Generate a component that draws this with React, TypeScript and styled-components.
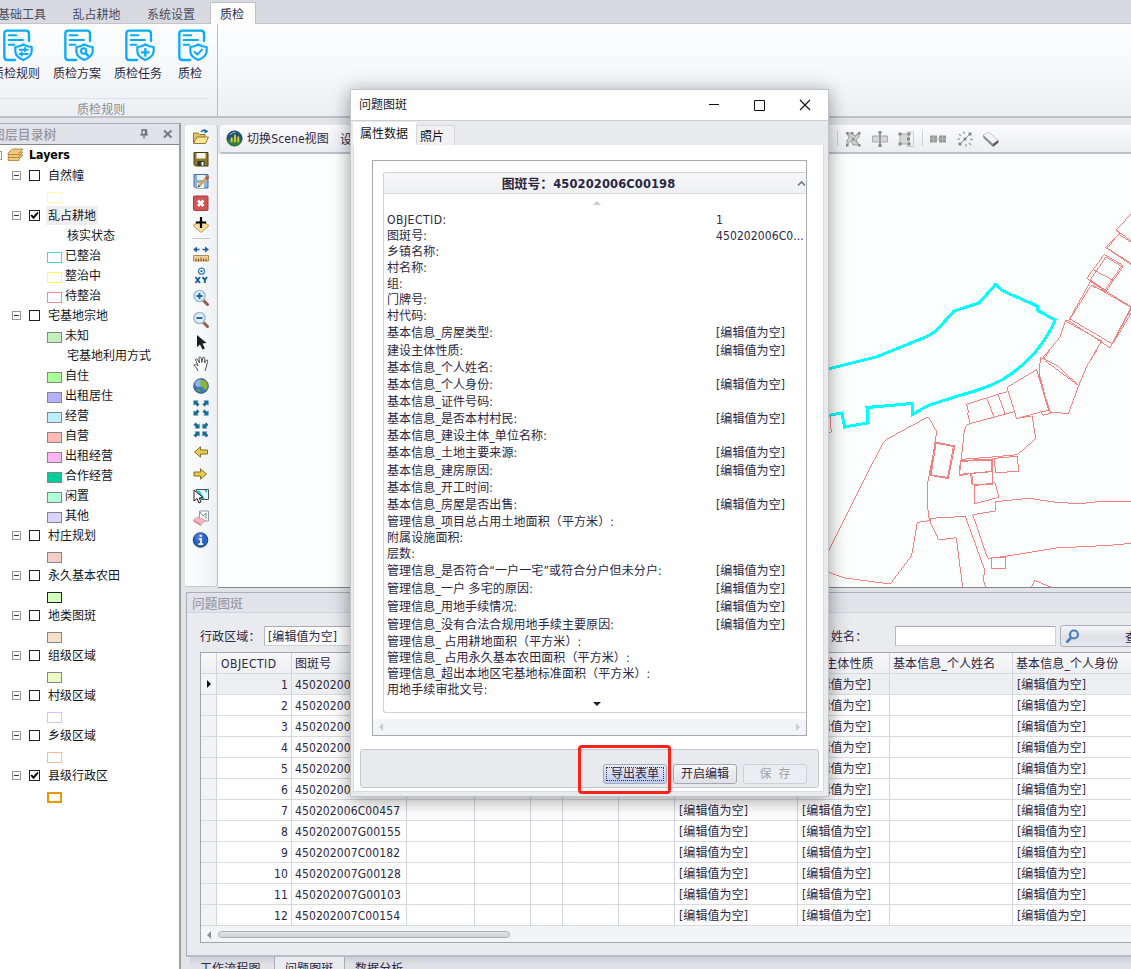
import React from 'react';
import styled, { createGlobalStyle, css } from 'styled-components';

const Global = createGlobalStyle`
  * { box-sizing: border-box; }
  body { margin: 0; overflow: hidden; }
  body, button, input {
    font-family: "DejaVu Sans Condensed", "DejaVu Sans", "Noto Sans CJK SC", sans-serif;
    font-stretch: condensed;
    font-size: 12px;
    letter-spacing: 0.1px;
    color: #2b2742;
  }
`;

const Window = styled.div`
  position: relative;
  display: flex;
  flex-direction: column;
  width: 1131px;
  height: 969px;
  overflow: hidden;
  background: #e3e4e9;
  line-height: 16px;
  white-space: nowrap;
`;

/* ---------- ribbon ---------- */
const TabStrip = styled.div`
  display: flex;
  flex: none;
  height: 24px;
  padding-top: 2px;
  background: #d9dae0;
  border-bottom: 1px solid #c4c5cc;
`;
const RibbonTab = styled.div<{ $active?: boolean; $w: number; $ml?: number }>`
  flex: none;
  width: ${p => p.$w}px;
  height: 22px;
  margin-left: ${p => p.$ml || 0}px;
  padding-top: 5px;
  text-align: center;
  letter-spacing: 0;
  color: #4b4a5c;
  ${p => p.$active && css`
    color: #2b2742;
    background: #fdfdfe;
    border: 1px solid #c0c1c9;
    border-bottom: 0;
    border-radius: 2px 2px 0 0;
    padding: 4px 2px 0 0;
  `}
`;
const Ribbon = styled.div`
  display: flex;
  flex: none;
  height: 94px;
  background: linear-gradient(#fdfdfe, #f8f9fb 45%, #edeff3);
  border-bottom: 2px solid #bfc0c8;
`;
const RibbonGroup = styled.div`
  display: flex;
  flex-direction: column;
  width: 218px;
  border-right: 1px solid #b9bac3;
`;
const RibbonItems = styled.div`
  display: flex;
  gap: 13px;
  height: 75px;
  margin-left: -8px;
  padding-top: 5px;
`;
const RibbonItem = styled.div<{ $w: number; $shift?: number }>`
  display: flex;
  flex-direction: column;
  align-items: center;
  gap: 4px;
  width: ${p => p.$w}px;
  letter-spacing: 0;
  svg {
    flex: none;
    margin-left: ${p => p.$shift || 3}px;
  }
`;
const GroupCaption = styled.div`
  height: 18px;
  padding: 3px 0 0;
  margin-right: 9px;
  padding-left: 77px;
  border-top: 1px solid #e0e1e7;
  color: #8b8c96;
`;

/* ---------- body ---------- */
const Body = styled.div`
  display: flex;
  flex: 1;
  min-height: 0;
  padding-top: 5px;
`;
const LayersPanel = styled.div`
  display: flex;
  flex-direction: column;
  flex: none;
  width: 181px;
  border-top: 1px solid #a9aab3;
  border-right: 2px solid #9c9da5;
`;
const PanelHeader = styled.div`
  display: flex;
  align-items: center;
  flex: none;
  height: 21px;
  background: #e1e2e8;
  border-bottom: 1px solid #85868d;
  color: #9596a3;
  font-size: 12.8px;
  font-weight: 500;
`;
const PanelTitle = styled.span`
  flex: 1;
  margin-left: -8px;
  padding-top: 1px;
`;
const HeaderIcons = styled.div`
  display: flex;
  align-items: center;
  gap: 15px;
  padding-right: 6px;
`;
const Tree = styled.div`
  flex: 1;
  background: #fff;
  color: #16161c;
  letter-spacing: 0;
`;
const TreeRow = styled.div`
  display: flex;
  align-items: center;
  height: 20px;
  padding-left: 12px;
`;
const Expander = styled.span`
  display: flex;
  align-items: center;
  justify-content: center;
  width: 9px;
  height: 9px;
  border: 1px solid #93939a;
  &::after { content: ""; width: 5px; height: 1px; background: #333; }
`;
const Check = styled.span`
  display: flex;
  width: 11px;
  height: 11px;
  margin: 0 5px 0 8px;
  border: 1px solid #222;
  background: #fff;
`;
const TreeLabel = styled.span<{ $selected?: boolean }>`
  height: 19px;
  line-height: 20px;
  padding: 0 2px 0 2px;
  margin-left: 1px;
  background: ${p => (p.$selected ? '#efefef' : 'transparent')};
`;
const Swatch = styled.span<{ $fill: string; $line: string; $thick?: boolean }>`
  width: 15px;
  height: 11px;
  margin: 5px 3px 0 35px;
  background: ${p => p.$fill};
  border: ${p => (p.$thick ? 2 : 1)}px solid ${p => p.$line};
`;
const LegendText = styled.span`
  padding-top: 2px;
`;
const LegendHeading = styled.span`
  padding: 2px 0 0 55px;
`;
const RootRow = styled(TreeRow)`
  padding-left: 0;
  font-size: 12.3px;
  font-weight: bold;
  color: #000;
  svg { margin: 0 5px 0 5px; }
`;
const CutExpander = styled.span`
  width: 2px;
  height: 9px;
  border: solid #93939a;
  border-width: 1px 1px 1px 0;
`;

const Workspace = styled.div`
  display: flex;
  flex-direction: column;
  flex: 1;
  min-width: 0;
  padding-left: 4px;
`;
const Upper = styled.div`
  display: flex;
  flex: none;
  height: 465px;
  padding-top: 2px;
`;
const SideTools = styled.div`
  display: flex;
  flex-direction: column;
  align-items: center;
  flex: none;
  width: 33px;
  height: 462px;
  padding-top: 1px;
  border-radius: 3px;
  background: linear-gradient(90deg, #fff, #eef0f4);
  border-right: 1px solid #bcbdc6;
  border-bottom: 1px solid #c7c8cf;
`;
const ToolSlot = styled.div`
  display: flex;
  align-items: center;
  justify-content: center;
  height: 22px;
`;
const ToolDivider = styled.div`
  width: 18px;
  height: 1px;
  margin: 2px 0 4px;
  background: #c9cad1;
`;
const MapColumn = styled.div`
  display: flex;
  flex-direction: column;
  flex: 1;
  min-width: 0;
`;
const MapToolbar = styled.div`
  display: flex;
  align-items: center;
  flex: none;
  height: 29px;
  margin-left: 2px;
  padding-left: 6px;
  border-radius: 3px 0 0 3px;
  background: linear-gradient(#fbfbfd, #eceef2);
  border-bottom: 2px solid #bfc0c9;
`;
const ToolText = styled.span`
  width: 97px;
  padding: 1px 0 0 4px;
`;
const EditTools = styled.div`
  display: flex;
  align-items: center;
  gap: 8.5px;
  margin-left: auto;
  padding-right: 131px;
`;
const VLine = styled.span`
  width: 1px;
  height: 15px;
  margin: 0 -2px;
  background: #cfcfd4;
`;
const MapView = styled.div`
  flex: none;
  height: 434px;
  overflow: hidden;
  background: #fdfefe;
  border-bottom: 1px solid #84858b;
  svg { display: block; }
`;

/* ---------- results panel ---------- */
const Results = styled.div`
  display: flex;
  flex-direction: column;
  flex: none;
  height: 365px;
  margin: 4px 0 0 1px;
  border: 1px solid #adaeb9;
  border-right: 0;
  border-bottom: 2px solid #babbc5;
  background: #eaebef;
`;
const ResultsTitle = styled.div`
  flex: none;
  height: 20px;
  padding: 3px 0 0 5px;
  background: #e2e3e8;
  border-bottom: 1px solid #d3d4db;
  color: #9a9ba8;
  font-weight: 500;
  font-size: 12.6px;
`;
const FilterRow = styled.div`
  display: flex;
  align-items: center;
  flex: none;
  height: 39px;
  padding: 7px 0 0 12px;
`;
const Field = styled.div<{ $w: number }>`
  display: flex;
  align-items: center;
  flex: none;
  width: ${p => p.$w}px;
  height: 20px;
  padding: 1px 0 0 3px;
  background: #fff;
  border: 1px solid #cfd0d8;
  border-top-color: #a9aab5;
  border-left-color: #b5b6c0;
`;
const FilterLabel = styled.span`
  flex: none;
  width: 65px;
  padding: 2px 0 0 1px;
`;
const FilterGap = styled.div`
  flex: none;
  width: 466px;
`;
const SearchButton = styled.button`
  display: flex;
  align-items: center;
  gap: 45px;
  flex: none;
  width: 100px;
  height: 22px;
  margin-left: 4px;
  padding: 0 4px;
  border: 1px solid #adaebb;
  border-radius: 3px;
  background: linear-gradient(#f4f5f7, #dfe1e6 55%, #e8e9ed);
  svg { flex: none; }
`;
const Grid = styled.div`
  flex: none;
  height: 291px;
  margin-left: 13px;
  border: 1px solid #a4a5b0;
  border-right: 0;
  overflow: hidden;
  background: #f3f4f6;
`;
const GridRow = styled.div<{ $head?: boolean; $focus?: boolean }>`
  display: grid;
  grid-template-columns: 16px 75px 115px 68px 56px 32px 56px 56px 123px 92px 123px 124px;
  height: 21px;
  background: ${p => (p.$head ? 'linear-gradient(#f8f8fa, #eeeff2)' : p.$focus ? '#eeeff1' : '#fff')};
`;
const Cell = styled.div<{ $right?: boolean; $indicator?: boolean; $tight?: boolean }>`
  display: flex;
  align-items: center;
  justify-content: ${p => (p.$right ? 'flex-end' : 'flex-start')};
  padding: 2px 3px 0 ${p => (p.$tight ? 3 : 4)}px;
  overflow: hidden;
  border-right: 1px solid #d3d4dc;
  border-bottom: 1px solid #d9dae1;
  ${p => p.$indicator && css`background: #f3f4f6; padding: 0 3px 0 6px;`}
`;
const GridScroll = styled.div`
  display: flex;
  align-items: center;
  gap: 7px;
  height: 17px;
  padding-left: 6px;
`;
const Thumb = styled.div`
  width: 292px;
  height: 7px;
  border: 1px solid #abacb7;
  border-radius: 4px;
  background: linear-gradient(#e3e4e8, #cfd0d6);
`;
const Arrow = styled.i<{ $dir: 'left' | 'right' | 'up' | 'down'; $color: string }>`
  width: 0;
  height: 0;
  border: 4px solid transparent;
  ${p => p.$dir === 'left' && `border-left-width: 0; border-right-color: ${p.$color};`}
  ${p => p.$dir === 'right' && `border-right-width: 0; border-left-color: ${p.$color};`}
  ${p => p.$dir === 'up' && `border-top-width: 0; border-bottom-color: ${p.$color};`}
  ${p => p.$dir === 'down' && `border-bottom-width: 0; border-top-color: ${p.$color};`}
`;
const Wide = styled.span`
  letter-spacing: 0.5px;
`;
const BottomTabs = styled.div`
  display: flex;
  flex: none;
  height: 12px;
  margin-left: 5px;
  background: linear-gradient(#cfd0d7, #e0e1e6 8px);
`;
const BottomTab = styled.div<{ $w: number; $active?: boolean }>`
  flex: none;
  width: ${p => p.$w}px;
  height: 12px;
  overflow: hidden;
  padding: 4px 0 0 10px;
  border-right: 1px solid #a9aab4;
  background: ${p => (p.$active ? '#eaebef' : 'linear-gradient(#cfd0d7, #e0e1e6 8px)')};
  &:last-child { border-right: 0; }
`;

/* ---------- dialog ---------- */
const Dialog = styled.div`
  position: absolute;
  left: 350px;
  top: 89px;
  display: flex;
  flex-direction: column;
  width: 479px;
  height: 708px;
  background: #e9eaee;
  border: 1px solid #c3c4ca;
  box-shadow: 0 3px 18px rgba(0, 0, 0, 0.4);
`;
const TitleBar = styled.div`
  display: flex;
  align-items: center;
  flex: none;
  height: 31px;
  padding: 0 17px 0 8px;
  background: #fff;
  border-bottom: 1px solid #cccdd3;
  color: #17171c;
  svg { margin-left: 34px; }
`;
const TitleText = styled.span`
  flex: 1;
  letter-spacing: 0;
`;
const DialogTabs = styled.div`
  display: flex;
  align-items: flex-end;
  flex: none;
  height: 24px;
  margin: 0 4px 0 2px;
`;
const DialogTab = styled.div<{ $active?: boolean }>`
  width: ${p => (p.$active ? 63 : 39)}px;
  height: ${p => (p.$active ? 23 : 20)}px;
  padding: ${p => (p.$active ? '4px 0 0 7px' : '3px 0 0 3px')};
  background: ${p => (p.$active ? '#fff' : '#f0f0f0')};
  border: ${p => (p.$active ? '0 solid' : '1px solid #d7d7dc')};
  border-bottom: 0;
  letter-spacing: 0;
  color: #111117;
`;
const DialogPage = styled.div`
  display: flex;
  flex-direction: column;
  flex: 1;
  min-height: 0;
  margin: 0 4px 4px 2px;
  padding: 15px 4px 4px 6px;
  background: #fff;
  border: 1px solid #d9dae0;
  border-top: 0;
`;
const FormFrame = styled.div`
  display: flex;
  flex-direction: column;
  flex: none;
  width: 435px;
  height: 576px;
  margin-left: 12px;
  padding-top: 11px;
  overflow: hidden;
  border: 1px solid #a7a8b4;
`;
const FormGroup = styled.div`
  display: flex;
  flex-direction: column;
  flex: none;
  height: 541px;
  margin-left: 10px;
  border: 1px solid #d0d1d8;
  border-right: 0;
  border-radius: 3px 0 0 3px;
`;
const FormHead = styled.div`
  display: flex;
  align-items: center;
  flex: none;
  height: 21px;
  background: linear-gradient(#f7f7f9, #eff0f3);
  border-bottom: 1px solid #d9dae0;
  font-weight: bold;
  font-size: 12.8px;
`;
const FormHeadText = styled.span`
  flex: 1;
  text-align: center;
  padding: 2px 4px 0 0;
`;
const ScrollHint = styled.div<{ $h: number }>`
  display: flex;
  align-items: center;
  justify-content: center;
  flex: none;
  height: ${p => p.$h}px;
  padding-left: 4px;
`;
const FormRow = styled.div<{ $edit: boolean }>`
  display: grid;
  grid-template-columns: 329px 1fr;
  align-items: center;
  flex: none;
  height: ${p => (p.$edit ? 18 : 16)}px;
  line-height: ${p => (p.$edit ? 20 : 18)}px;
  padding-left: 3px;
`;
const FormScroll = styled.div`
  display: flex;
  align-items: center;
  justify-content: space-between;
  height: 17px;
  margin-top: 6px;
  padding: 0 6px;
  background: #f3f4f6;
`;
const Footer = styled.div`
  display: flex;
  align-items: center;
  justify-content: flex-end;
  gap: 6px;
  flex: none;
  width: 459px;
  height: 39px;
  margin-top: 13px;
  padding: 11px 11px 0 0;
  background: #e9eaee;
  border: 1px solid #c6c7d0;
  border-radius: 3px;
`;
const DialogButton = styled.button<{ $focus?: boolean; $off?: boolean }>`
  width: 64px;
  height: 20px;
  padding: 1px 0 0;
  line-height: 17px;
  letter-spacing: 0;
  border: 1px solid ${p => (p.$off ? '#cfd0d7' : '#a7a8b5')};
  border-radius: 3px;
  background: ${p => (p.$off ? '#ecedf0' : 'linear-gradient(#f6f6f8, #dfe1e7)')};
  color: ${p => (p.$off ? '#a2a3ac' : '#2b2742')};
  ${p => p.$focus && css`
    background: linear-gradient(#e8edfb, #bccbf0);
    outline: 1px dotted #333;
    outline-offset: -4px;
  `}
`;
const Highlight = styled.div`
  position: absolute;
  left: 578px;
  top: 745px;
  width: 93px;
  height: 49px;
  border: 3px solid #fb2317;
  border-radius: 4px;
`;

/* ---------- data ---------- */
const EMPTY = '[编辑值为空]';

type Node =
  | { k: 'layer'; t: string; on?: boolean; sel?: boolean }
  | { k: 'head'; t: string }
  | { k: 'sw'; t?: string; f: string; l?: string; thick?: boolean };

const nodes: Node[] = [
  { k: 'layer', t: '自然幢' },
  { k: 'sw', f: '#fff', l: '#ffffa0' },
  { k: 'layer', t: '乱占耕地', on: true, sel: true },
  { k: 'head', t: '核实状态' },
  { k: 'sw', t: '已整治', f: '#fff', l: '#40e0b0' },
  { k: 'sw', t: '整治中', f: '#fff', l: '#ffff46' },
  { k: 'sw', t: '待整治', f: '#fff', l: '#f58c8c' },
  { k: 'layer', t: '宅基地宗地' },
  { k: 'sw', t: '未知', f: '#c2f0bd' },
  { k: 'head', t: '宅基地利用方式' },
  { k: 'sw', t: '自住', f: '#abff96' },
  { k: 'sw', t: '出租居住', f: '#b3b0ff' },
  { k: 'sw', t: '经营', f: '#bdeeff' },
  { k: 'sw', t: '自营', f: '#ffbab5' },
  { k: 'sw', t: '出租经营', f: '#ffb5f2' },
  { k: 'sw', t: '合作经营', f: '#00cc99' },
  { k: 'sw', t: '闲置', f: '#b0ffd8' },
  { k: 'sw', t: '其他', f: '#d8d6ff' },
  { k: 'layer', t: '村庄规划' },
  { k: 'sw', f: '#f2d0c6' },
  { k: 'layer', t: '永久基本农田' },
  { k: 'sw', f: '#d2ffbe', l: '#222' },
  { k: 'layer', t: '地类图斑' },
  { k: 'sw', f: '#f5e0c8' },
  { k: 'layer', t: '组级区域' },
  { k: 'sw', f: '#e9fcc4' },
  { k: 'layer', t: '村级区域' },
  { k: 'sw', f: '#fff', l: '#dfc0ff' },
  { k: 'layer', t: '乡级区域' },
  { k: 'sw', f: '#fff', l: '#ffb59b' },
  { k: 'layer', t: '县级行政区', on: true },
  { k: 'sw', f: '#fff', l: '#e69a00', thick: true },
];

const fields: [string, string?, boolean?][] = [
  ['OBJECTID:', '1'],
  ['图斑号:', '450202006C0...'],
  ['乡镇名称:'],
  ['村名称:'],
  ['组:'],
  ['门牌号:'],
  ['村代码:'],
  ['基本信息_房屋类型:', EMPTY, true],
  ['建设主体性质:', EMPTY, true],
  ['基本信息_个人姓名:'],
  ['基本信息_个人身份:', EMPTY, true],
  ['基本信息_证件号码:'],
  ['基本信息_是否本村村民:', EMPTY, true],
  ['基本信息_建设主体_单位名称:'],
  ['基本信息_土地主要来源:', EMPTY, true],
  ['基本信息_建房原因:', EMPTY, true],
  ['基本信息_开工时间:'],
  ['基本信息_房屋是否出售:', EMPTY, true],
  ['管理信息_项目总占用土地面积（平方米）:'],
  ['附属设施面积:'],
  ['层数:'],
  ['管理信息_是否符合“一户一宅”或符合分户但未分户:', EMPTY, true],
  ['管理信息_一户 多宅的原因:', EMPTY, true],
  ['管理信息_用地手续情况:', EMPTY, true],
  ['管理信息_没有合法合规用地手续主要原因:', EMPTY, true],
  ['管理信息_ 占用耕地面积（平方米）:'],
  ['管理信息_ 占用永久基本农田面积（平方米）:'],
  ['管理信息_超出本地区宅基地标准面积（平方米）:'],
  ['用地手续审批文号:'],
];

const codes = [
  '450202006C00198', '450202006C00201', '450202006C00215', '450202006C00233',
  '450202006C00318', '450202006C00402', '450202006C00457', '450202007G00155',
  '450202007C00182', '450202007G00128', '450202007G00103', '450202007C00154',
];

/* ---------- icons ---------- */
const DocIcon = ({ kind }: { kind: 'rule' | 'plan' | 'task' | 'check' }) => (
  <svg width="30" height="33" viewBox="0 0 90 99" fill="none" stroke="#08acfa" strokeWidth="7" strokeLinecap="round" strokeLinejoin="round">
    <path d="M78 36V14Q78 5 69 5H13Q4 5 4 14V84Q4 93 13 93H36" />
    <path d="M17 19H40M17 33H60M17 47H34" strokeWidth="6" />
    <path d="M61 46Q50 53 37 54V68Q39 85 61 93Q83 85 86 68V54Q72 53 61 46Z" strokeWidth="6.5" fill="#fafbfc" />
    {kind === 'rule' && <path d="M50 62H74M50 75H74M66 57V67M56 70V80" strokeWidth="6" />}
    {kind === 'plan' && <><circle cx="59" cy="66" r="8" strokeWidth="6" /><path d="M65 73L72 80" /></>}
    {kind === 'task' && <path d="M61 60V80M51 70H71" />}
    {kind === 'check' && <path d="M50 69L58 77L72 62" strokeWidth="6" />}
  </svg>
);

const T = ({ children }: { children: React.ReactNode }) => (
  <svg width="18" height="18" viewBox="0 0 18 18">{children}</svg>
);

const globe = (
  <>
    <circle cx="9" cy="9" r="7.5" fill="#3a78c0" />
    <circle cx="7" cy="6" r="4" fill="#b3d2f2" opacity=".7" />
    <path d="M8 4Q12 1.500 15 5Q17 8 15.500 12L12 13Q12 10 9 9.500Q8 6 8 4Z" fill="#8bb43b" />
    <path d="M4 12Q8 11 9 15Q6 16 4 12Z" fill="#6c9c35" />
    <circle cx="9" cy="9" r="7.300" fill="none" stroke="#2b5288" strokeWidth=".8" />
  </>
);
const magnifier = (
  <>
    <path d="M11 11L15.500 15.500" stroke="#9c5a48" strokeWidth="3" strokeLinecap="round" />
    <circle cx="7.500" cy="7" r="5.500" fill="#e2f2fd" stroke="#9dbdd8" strokeWidth="1.600" />
  </>
);
const corner = 'M0 0H5L3.800 1.600L6 3.900L3.900 6L1.600 3.800L0 5Z';

const sideIcons: React.ReactNode[] = [
  <>
    <path d="M1.500 15V5H6L7.500 6.500H13V9" fill="#e2c566" stroke="#96792a" />
    <path d="M1.500 15.500L5 9H16.500L13.500 15.500Z" fill="#fae79c" stroke="#96792a" />
    <path d="M9 4Q11 1.500 13 3" fill="none" stroke="#246aa5" strokeWidth="1.600" />
    <path d="M12.500 .8L16.500 3.500L12.500 5.500Z" fill="#246aa5" />
  </>,
  <>
    <path d="M2 2.500H16V16H3.500L2 14.500Z" fill="#8c7b2f" stroke="#453c17" />
    <path d="M4.500 3H13.500V8.500H4.500Z" fill="#f6f4e6" />
    <path d="M5.500 11H12.500V16H5.500Z" fill="#35332a" />
    <path d="M9.500 12H11.500V15.500H9.500Z" fill="#fff" />
  </>,
  <>
    <path d="M2 2.500H16V16H3.500L2 14.500Z" fill="#8db2dc" stroke="#49719e" />
    <path d="M5 3H13V8H5ZM5 11H12V16H5Z" fill="#eaf2fb" />
    <path d="M7 14L14.500 6" stroke="#d8a848" strokeWidth="2.600" />
    <path d="M14 7L16.500 4.500" stroke="#bb5248" strokeWidth="2.600" />
    <path d="M5.500 15.500L8 14.800L6.300 13Z" fill="#333" />
  </>,
  <>
    <rect x="1.500" y="2" width="14.500" height="14.500" rx="1" fill="#d25454" stroke="#a33d40" />
    <path d="M6 6.500L11.500 12M11.500 6.500L6 12" stroke="#fff" strokeWidth="2.600" />
  </>,
  <>
    <path d="M1 9.500L9 4.500L17 9.500L9 16.500Z" fill="#fbdf94" stroke="#c99f4e" />
    <path d="M9 1V12M3.800 6.500H14.200" stroke="#000" strokeWidth="2.200" />
  </>,
  <>
    <path d="M1 4.500L5 1.500V3.700H7.500V5.300H5V7.500ZM17 4.500L13 1.500V3.700H10.500V5.300H13V7.500Z" fill="#1d629c" />
    <path d="M1.500 10.500H16.500V16H1.500Z" fill="#f2cf93" stroke="#b48a52" />
    <path d="M4 16V13.500M6.500 16V13.500M9 16V12.500M11.500 16V13.500M14 16V13.500" stroke="#7a4f21" />
  </>,
  <>
    <circle cx="9.500" cy="4.200" r="3" fill="#fff" stroke="#3f81b8" strokeWidth="1.300" />
    <circle cx="9.500" cy="4.200" r="1.100" fill="#1d629c" />
    <path d="M3.500 10L8 16M8 10L3.500 16M10.500 10L12.800 13L15 10M12.800 13V16" stroke="#1d5fa0" strokeWidth="1.900" fill="none" />
  </>,
  <>{magnifier}<path d="M7.500 4V10M4.500 7H10.500" stroke="#1d629c" strokeWidth="1.900" /></>,
  <>{magnifier}<path d="M4.500 7H10.500" stroke="#1d629c" strokeWidth="1.900" /></>,
  <path d="M5 2V14L8 11.500L10.500 16.500L12.800 15.400L10.500 10.500L14.500 10Z" fill="#1c1c1e" />,
  <path d="M6 16Q5 12.500 1.800 10Q3 8.500 6 10.500L3.500 4.500Q4.500 3 6 5L7.500 8L7 2.500Q8.500 1 9.300 3L9.800 7.500L11 2.500Q12.500 1.500 12.800 3.500L12.500 8L14.500 5Q16 4.500 15.600 6.500L14.200 12L13 16" fill="#fff" stroke="#555" />,
  globe,
  <g fill="#1b6a98">
    <path d={corner} transform="translate(1.500 1.500)" />
    <path d={corner} transform="translate(16.500 1.500) scale(-1 1)" />
    <path d={corner} transform="translate(1.500 16.500) scale(1 -1)" />
    <path d={corner} transform="translate(16.500 16.500) scale(-1 -1)" />
  </g>,
  <g fill="#1b6a98">
    <path d={corner} transform="translate(7.600 7.600) scale(-1 -1)" />
    <path d={corner} transform="translate(10.400 7.600) scale(1 -1)" />
    <path d={corner} transform="translate(7.600 10.400) scale(-1 1)" />
    <path d={corner} transform="translate(10.400 10.400)" />
  </g>,
  <path d="M2.500 9L8.500 3.800V7H15.500V11H8.500V14.200Z" fill="#e5cb54" stroke="#857121" />,
  <path d="M14.500 9L8.500 3.800V7H2V11H8.500V14.200Z" fill="#e5cb54" stroke="#857121" />,
  <>
    <path d="M4 2.500H16.500V12.500H9Z" fill="#e8f5f8" stroke="#555" />
    <path d="M7 3L13 12H9L5 5ZM12 3H15V6Z" fill="#27c4df" />
    <path d="M2 3V14L5 11.500L7 16L9 15L7.200 11L11 10.500Z" fill="#fff" stroke="#222" />
  </>,
  <>
    <path d="M7.500 2H16.500V12H7.500Z" fill="#fff" stroke="#8a99a3" />
    <path d="M8 3L11 7L14 4V10" fill="none" stroke="#72838d" />
    <path d="M1.500 11L5.500 8L13.500 11.500L9 15.500Z" fill="#f7b7bd" stroke="#c98a90" strokeWidth=".7" />
    <path d="M1.500 11L9 15.500V17L1.500 12.500Z" fill="#d5838c" />
  </>,
  <>
    <circle cx="8.500" cy="9" r="7.300" fill="#2c62c4" stroke="#1c4593" />
    <circle cx="7.500" cy="6" r="4" fill="#6f9be6" opacity=".4" />
    <path d="M8.700 3.800V5.800" stroke="#fff" strokeWidth="2.200" />
    <path d="M6.800 8H9V13M6.500 13.200H11" stroke="#fff" strokeWidth="1.700" fill="none" />
  </>,
];

const Parcels = () => (
  <svg width="913" height="433" viewBox="218 154 913 433" fill="none" shapeRendering="crispEdges">
    <g stroke="#f58080" strokeWidth="3">
      <g transform="translate(820 120) scale(.33333)">
        <path d="M933 282L889 330L898 340L856 382L933 434M889 330L933 362M896 343L933 366M893 345L862 385L933 430" />
        <path d="M853 403L910 437L858 514L800 475ZM858 411L904 439L855 510L810 480ZM822 450L880 482" />
        <path d="M811 485L936 562L870 683L746 602ZM815 494L933 562L876 671L750 597ZM820 500L855 514M936 575L878 672" />
        <path d="M746 602L736 603L719 653L663 720M845 663L811 720M736 603L845 663" />
      </g>
      <g transform="translate(820 350) scale(.33333)">
        <path d="M690 0L672 27L661 22L658 72L688 186L745 191L776 107L675 32M672 27L712 47L776 107L800 50L831 0" />
        <path d="M561 112L650 59L692 190L668 196L664 185L590 206ZM650 59L686 182L664 185M598 202L634 200" />
        <path d="M561 125L439 163L446 185L443 191L450 221L583 185M502 147L522 202M535 134L556 195" />
        <path d="M450 221L440 225L433 240L424 325L418 377L455 370M424 328L516 321L592 314L647 266L637 199" />
        <path d="M419 334L516 330V365L418 373L421 332L518 327V403H455L452 370L516 364M455 370L459 405" />
        <path d="M522 325L592 319L596 364L527 368ZM462 407L526 398L536 442L464 461Z" />
        <path d="M345 276L404 288L385 386L330 376ZM348 280L400 289L383 382L333 375Z" />
        <path d="M23 607L187 282L202 267L325 200L349 243L347 276L330 360L322 405V465L328 510M404 292L385 382" />
        <path d="M23 666L75 684L211 702L275 616L292 517L330 512L332 505L436 499L494 660L490 690L497 712M328 510L356 570L409 563L428 712" />
        <path d="M933 454H844L778 461L709 457L627 445L526 455V483L458 494L503 625L550 620L709 594L870 586L933 580" />
        <path d="M514 622H557V657H514ZM634 712L644 691L694 712M23 247H34L30 200" />
      </g>
    </g>
    <path d="M828 369L876 357L927 336.500L936 331L954 311L979 303L995.500 284.500L1003 291L1037 306V310L1055 320Q1052 330 1037 350Q1024 366 1002 380Q987 388 961 395L928 405.500L912.500 414.500L912 403.500L867 407.500L868 423L844.500 427L842 413L828 415.500" stroke="#00ffff" strokeWidth="3" />
  </svg>
);

const DialogForm = () => (
  <FormFrame>
    <FormGroup>
      <FormHead>
        <FormHeadText>图斑号：450202006C00198</FormHeadText>
        <svg width="9" height="7" viewBox="0 0 9 7"><path d="M1 5.500L4.500 2L8 5.500" fill="none" stroke="#77788a" strokeWidth="1.600" /></svg>
      </FormHead>
      <ScrollHint $h={17}><Arrow $dir="up" $color="#c9cad2" /></ScrollHint>
      {fields.map(([label, value, edit], i) => (
        <FormRow key={label} $edit={!!edit}>
          {i === 0 ? <Wide>{label}</Wide> : <span>{label}</span>}
          <span>{value}</span>
        </FormRow>
      ))}
      <ScrollHint $h={13}><Arrow $dir="down" $color="#1f1c33" /></ScrollHint>
    </FormGroup>
    <FormScroll>
      <Arrow $dir="left" $color="#cbccd3" />
      <Arrow $dir="right" $color="#cbccd3" />
    </FormScroll>
  </FormFrame>
);

export default function App() {
  return (
    <Window>
      <Global />
      <TabStrip>
        <RibbonTab $w={48} $ml={-2}>基础工具</RibbonTab>
        <RibbonTab $w={101}>乱占耕地</RibbonTab>
        <RibbonTab $w={48}>系统设置</RibbonTab>
        <RibbonTab $w={46} $ml={15} $active>质检</RibbonTab>
      </TabStrip>
      <Ribbon>
        <RibbonGroup>
          <RibbonItems>
            <RibbonItem $w={48}><DocIcon kind="rule" />质检规则</RibbonItem>
            <RibbonItem $w={48}><DocIcon kind="plan" />质检方案</RibbonItem>
            <RibbonItem $w={48}><DocIcon kind="task" />质检任务</RibbonItem>
            <RibbonItem $w={30} $shift={5}><DocIcon kind="check" />质检</RibbonItem>
          </RibbonItems>
          <GroupCaption>质检规则</GroupCaption>
        </RibbonGroup>
      </Ribbon>

      <Body>
        <LayersPanel>
          <PanelHeader>
            <PanelTitle>图层目录树</PanelTitle>
            <HeaderIcons>
              <svg width="8" height="10" viewBox="0 0 8 10"><path d="M2 1H6.500V5.500H2ZM0 5.800H8M4 6V9.500M5.500 1V5" fill="none" stroke="#6f7080" strokeWidth="1.300" /></svg>
              <svg width="10" height="10" viewBox="0 0 10 10"><path d="M1 1.500L8.500 8.500M8.500 1.500L1 8.500" stroke="#777887" strokeWidth="1.900" /></svg>
            </HeaderIcons>
          </PanelHeader>
          <Tree>
            <RootRow>
              <CutExpander />
              <svg width="17" height="14" viewBox="0 0 17 14">
                {[8.5, 5.5, 2.5].map(y => (
                  <path key={y} d={`M1 ${y + 2.5}L5.500 ${y - 1.5}H16L12 ${y + 2.5}V${y + 4}H1Z`} fill="#f0c981" stroke="#b98436" strokeWidth=".9" />
                ))}
              </svg>
              Layers
            </RootRow>
            {nodes.map((n, i) => (
              <TreeRow key={i}>
                {n.k === 'layer' && (
                  <>
                    <Expander />
                    <Check>
                      {n.on && <svg width="9" height="9" viewBox="0 0 9 9"><path d="M1.200 4L3.500 6.700L8 1.500" fill="none" stroke="#000" strokeWidth="1.900" /></svg>}
                    </Check>
                    <TreeLabel $selected={n.sel}>{n.t}</TreeLabel>
                  </>
                )}
                {n.k === 'head' && <LegendHeading>{n.t}</LegendHeading>}
                {n.k === 'sw' && (
                  <>
                    <Swatch $fill={n.f} $line={n.l || '#858585'} $thick={n.thick} />
                    <LegendText>{n.t}</LegendText>
                  </>
                )}
              </TreeRow>
            ))}
          </Tree>
        </LayersPanel>

        <Workspace>
          <Upper>
            <SideTools>
              {sideIcons.map((icon, i) => (
                <React.Fragment key={i}>
                  {i === 5 && <ToolDivider />}
                  <ToolSlot><T>{icon}</T></ToolSlot>
                </React.Fragment>
              ))}
            </SideTools>
            <MapColumn>
              <MapToolbar>
                <svg width="17" height="17" viewBox="0 0 18 18">
                  <circle cx="9" cy="9" r="8" fill="#1e5873" stroke="#17405a" />
                  <path d="M2 11Q8 6 16 11Q14 17 9 17Q4 17 2 11Z" fill="#2f8338" />
                  <path d="M5 13V8H7V13M8.500 13V5H10.500V13M12 13V7H14V13" fill="#e8c23c" />
                  <path d="M4 5Q7 2 10 2.500" stroke="#8fc3dc" fill="none" />
                </svg>
                <ToolText>切换Scene视图</ToolText>
                <LegendText>设</LegendText>
                <EditTools>
                  <VLine />
                  <T><path d="M3 3H8L10 6L15 3V7L12 10L15 15H9L7 11L3 15V10L5 8Z" fill="#d2d2d2" stroke="#9c9c9c" /><path d="M3 3L15 15M15 3L3 15" stroke="#aaa" /><path d="M2 2h2.500v2.500H2ZM7 2h2.500v2.500H7ZM14 2h2.500v2.500h-2.500ZM2 14h2.500v2.500H2ZM14 14h2.500v2.500h-2.500ZM8 8h2.500v2.500H8Z" fill="#888" /></T>
                  <T><path d="M1.500 6H16.500V12H1.500Z" fill="#d5d5d5" stroke="#aaa" /><path d="M9 2V16" stroke="#888" strokeWidth="1.500" /><path d="M7.500 1h3v3h-3ZM7.500 14h3v3h-3Z" fill="#888" /></T>
                  <T><path d="M9 2H16.500V16.500H9" fill="none" stroke="#ccc" /><path d="M3 4H12V14H3Z" fill="#d8d8d8" stroke="#aaa" /><path d="M1.500 2.500h3v3h-3ZM10.500 2.500h3v3h-3ZM1.500 12.500h3v3h-3ZM10.500 12.500h3v3h-3ZM10 7.500h3v3h-3Z" fill="#888" /></T>
                  <VLine />
                  <T><path d="M1 5.500H8V12.500H1ZM10 5.500H17V12.500H10Z" fill="#999" /><path d="M1 9H17M4.500 6V12M13.500 6V12" stroke="#b9b9b9" /></T>
                  <T><path d="M4 14L14 4" stroke="#999" /><path d="M2.500 12.500h3v3h-3ZM12.500 2.500h3v3h-3ZM7.500 7.500h3v3h-3Z" fill="#888" /><path d="M3 4L5 6M8 1.500V4M1.500 9H4M13 13L15 15M10 14V16.500M14 9.500H17" stroke="#aaa" strokeWidth="1.600" /></T>
                  <T><path d="M1 5L7 2L16 10L11 14Z" fill="#f4f4f4" stroke="#b5b5b5" strokeWidth=".7" /><path d="M1 5L11 14V17L1.500 8Z" fill="#8b8b8b" /><path d="M11 14L16.500 10V12.500L11 17Z" fill="#555" /></T>
                </EditTools>
              </MapToolbar>
              <MapView><Parcels /></MapView>
            </MapColumn>
          </Upper>

          <Results>
            <ResultsTitle>问题图斑</ResultsTitle>
            <FilterRow>
              <FilterLabel>行政区域：</FilterLabel>
              <Field $w={100}>{EMPTY}</Field>
              <FilterGap />
              <FilterLabel>姓名：</FilterLabel>
              <Field $w={161} />
              <SearchButton>
                <svg width="15" height="15" viewBox="0 0 15 15"><circle cx="9" cy="5.500" r="4" fill="none" stroke="#4a80bd" strokeWidth="2.200" /><path d="M1.500 13.500L6 8.800" stroke="#4a80bd" strokeWidth="2.800" /></svg>
                查询
              </SearchButton>
            </FilterRow>
            <Grid>
              <GridRow $head>
                <Cell />
                <Cell><Wide>OBJECTID</Wide></Cell>
                <Cell $tight>图斑号</Cell>
                <Cell /><Cell /><Cell /><Cell /><Cell /><Cell />
                <Cell $tight>建设主体性质</Cell>
                <Cell $tight>基本信息_个人姓名</Cell>
                <Cell $tight>基本信息_个人身份</Cell>
              </GridRow>
              {codes.map((code, i) => (
                <GridRow key={code} $focus={i === 0}>
                  <Cell $indicator>{i === 0 && <Arrow $dir="right" $color="#111" />}</Cell>
                  <Cell $right>{i + 1}</Cell>
                  <Cell $tight>{code}</Cell>
                  <Cell /><Cell /><Cell /><Cell /><Cell />
                  <Cell>{EMPTY}</Cell>
                  <Cell>{EMPTY}</Cell>
                  <Cell />
                  <Cell>{EMPTY}</Cell>
                </GridRow>
              ))}
              <GridScroll>
                <Arrow $dir="left" $color="#8f909d" />
                <Thumb />
              </GridScroll>
            </Grid>
          </Results>
          <BottomTabs>
            <BottomTab $w={85}>工作流程图</BottomTab>
            <BottomTab $w={70} $active>问题图斑</BottomTab>
            <BottomTab $w={70}>数据分析</BottomTab>
          </BottomTabs>
        </Workspace>
      </Body>

      <Dialog>
        <TitleBar>
          <TitleText>问题图斑</TitleText>
          <svg width="12" height="12" viewBox="0 0 12 12"><path d="M1 5.500H11" stroke="#111" /></svg>
          <svg width="11" height="11" viewBox="0 0 11 11"><path d="M.5 .5H10.500V10.500H.5Z" fill="none" stroke="#111" /></svg>
          <svg width="12" height="12" viewBox="0 0 12 12"><path d="M1 1L11 11M11 1L1 11" stroke="#111" strokeWidth="1.100" /></svg>
        </TitleBar>
        <DialogTabs>
          <DialogTab $active>属性数据</DialogTab>
          <DialogTab>照片</DialogTab>
        </DialogTabs>
        <DialogPage>
          <DialogForm />
          <Footer>
            <DialogButton $focus>导出表单</DialogButton>
            <DialogButton>开启编辑</DialogButton>
            <DialogButton $off>保&nbsp;&nbsp;存</DialogButton>
          </Footer>
        </DialogPage>
      </Dialog>
      <Highlight />
    </Window>
  );
}
